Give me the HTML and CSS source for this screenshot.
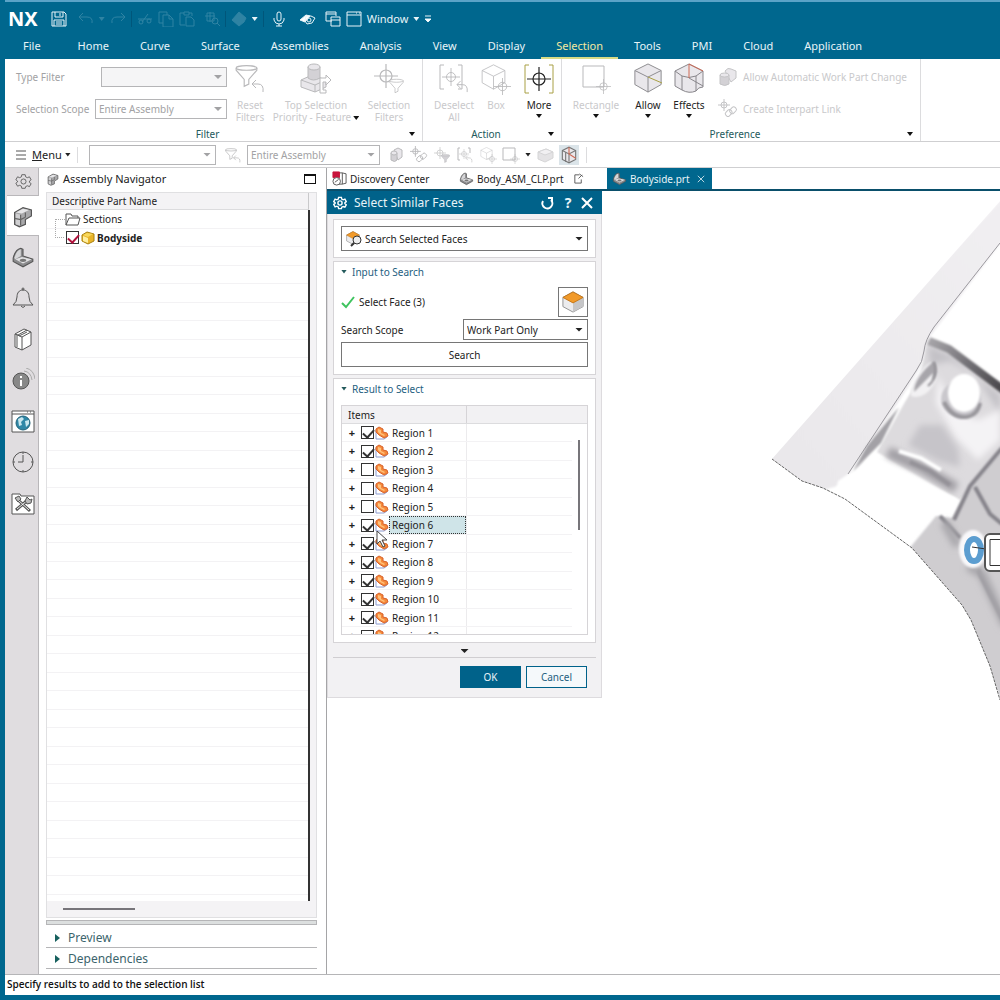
FILE: index.html
```
<!DOCTYPE html>
<html lang="en">
<head>
    <meta charset="UTF-8">
    <meta name="viewport" content="width=device-width, initial-scale=1.0">
    <title>NX - Select Similar Faces</title>
    <link rel="stylesheet" href="styles.css">
</head>
<body>
    <!-- Shared icons -->
    <svg class="sprite" aria-hidden="true">
        <symbol id="target" viewBox="0 0 20 20"><path d="M10 0v20M0 10h20"/><circle cx="10" cy="10" r="5"/></symbol>
        <symbol id="funnel" viewBox="0 0 20 20"><path d="M1 3v2l7 8v6l4-2v-4l7-8V3"/><ellipse cx="10" cy="3" rx="9" ry="2"/></symbol>
        <symbol id="cube" viewBox="0 0 32 32"><path d="M16 1l14 7v15l-14 8-14-8V8z"/><path d="M2 8l14 7 14-7M16 15v16" /></symbol>
        <symbol id="back" viewBox="0 0 14 14"><path d="M5 1L1 5l4 4M1 5h6q6 0 5 8"/></symbol>
        <symbol id="links" viewBox="0 0 20 20"><path d="M6 0v12M0 6h12"/><circle cx="6" cy="6" r="3"/><rect x="7" y="12" width="7" height="5" rx="2" transform="rotate(-45 10 14)"/><rect x="12" y="9" width="7" height="5" rx="2" transform="rotate(-45 15 12)"/></symbol>
        <symbol id="asm" viewBox="0 0 20 20"><path fill="#a9a9ab" stroke="#555" d="M3 7l7-4 7 2v5l-5 3v4l-5 2-4-2z"/><path fill="#e6e6e8" stroke="none" d="M4 7l6-3 5 1-6 3z"/><path fill="#cfcfd1" stroke="none" d="M4 8l4 1v9l-4-1z"/><path stroke="#666" d="M3 12l5 1 4-2M8 9v9M12 7v4"/></symbol>
        <symbol id="part" viewBox="0 0 22 20"><path fill="#8b8b8d" stroke="#555" d="M2 11Q4 3 9 2l2 1v6l9 3v2l-9 5-9-5z"/><path fill="#d6d6d8" stroke="none" d="M3 11Q5 4 9 3v6l-5 3z"/><path fill="#e2e2e4" stroke="none" d="M4 12l6-2 9 2-8 4z"/><ellipse cx="11" cy="13" rx="3" ry="1.5" fill="#777" stroke="none"/></symbol>
        <symbol id="face" viewBox="0 0 24 24"><path fill="#ececee" stroke="#8c8c8c" d="M12 1l11 6v10l-11 6-11-6V7z"/><path fill="#c6c6c8" stroke="none" d="M12 13l11-6v10l-11 6z"/><path fill="#f19a2a" stroke="#c37415" d="M12 1l11 6-11 6L1 7z"/></symbol>
        <symbol id="region" viewBox="0 0 14 14"><path fill="#fff" stroke="#8c9bd0" d="M1 4v9h8l3-2"/><path fill="#f58a3a" stroke="#d8612a" d="M1 3l3-2 4 2v3l4 1 1 3-4 2-5-3-3-3z"/><path fill="#ffc27e" stroke="none" d="M3 3l3 1v3l4 2-1 1-4-2-2-2z"/></symbol>
        <symbol id="gear" viewBox="0 0 20 20"><path d="M8 2h4l.5 2.500 2 1 2.500-1 2 3.500-2 1.500v1.500l2 1.500-2 3.500-2.500-1-2 1L12 18H8l-.5-2.500-2-1-2.500 1-2-3.500 2-1.500V9.500L1 8l2-3.500 2.500 1 2-1z"/><circle cx="10" cy="10" r="3"/></symbol>
    </svg>

    <header class="titlebar">
        <div class="quick">
            <strong class="logo">NX</strong>
            <svg class="ico save" viewBox="0 0 16 16"><path d="M1 1h12l2 2v12H1zM4 1v5h8V1M9 2v3M3 15V9h10v6M5 11h6M5 13h6"/></svg>
            <svg class="ico dim undo" viewBox="0 0 16 16"><path d="M5 2L1 6l4 4M1 6h8q6 0 5 6"/></svg>
            <i class="caret dim"></i>
            <svg class="ico dim" viewBox="0 0 16 16"><path d="M11 2l4 4-4 4M15 6H7q-6 0-5 6"/></svg>
            <i class="sep"></i>
            <svg class="ico dim" viewBox="0 0 16 16"><path d="M1 8h14M11 3L5 11"/><circle cx="4" cy="11" r="2"/><circle cx="12" cy="10" r="2"/></svg>
            <svg class="ico dim" viewBox="0 0 16 16"><path d="M1 1h8v3M1 1v11h4M5 4h6l4 4v8H5zM11 4v4h4"/></svg>
            <svg class="ico dim" viewBox="0 0 16 16"><path d="M5 2H1v12h5M5 1h5v3H5zM10 2h3v3M7 6h5l3 3v6H7z"/></svg>
            <svg class="ico dim find" viewBox="0 0 16 16"><path d="M1 5h10M6 1v10M3 2h7v8H3z"/><circle cx="11" cy="10" r="3"/><path d="M13 12l3 3"/></svg>
            <i class="sep"></i>
            <svg class="ico dim solid" viewBox="0 0 16 16"><path d="M8 1l7 6-2 4-5 4-7-6z"/></svg>
            <i class="caret"></i>
            <i class="sep"></i>
            <svg class="ico mic" viewBox="0 0 16 16"><rect x="6" y="1" width="4" height="9" rx="2"/><path d="M3 7v2q1 4 5 4t5-4V7M8 13v2M5 15h6"/></svg>
            <svg class="ico touch" viewBox="0 0 16 16"><path class="white" d="M0 9l6-5 4 1-5 6z"/><path d="M6 5h5l4 2-3 5-5 1-2-3z"/><circle cx="9" cy="9" r="2"/></svg>
            <svg class="ico cascade" viewBox="0 0 16 16"><path d="M7 10H1V1h10v4M1 3h10M6 6h9v9H6zM6 9h9"/></svg>
            <svg class="ico" viewBox="0 0 16 16"><path d="M1 1h14v14H1zM1 4h14M10 2h1M13 2h1"/></svg>
            <button class="window-menu">Window</button>
            <i class="caret"></i>
            <svg class="ico small" viewBox="0 0 8 8"><path d="M1 1h6"/><path class="white" d="M1 4h6L4 7z"/></svg>
        </div>
        <nav class="tabs">
            <a class="file" href="#">File</a>
            <a href="#">Home</a>
            <a href="#">Curve</a>
            <a href="#">Surface</a>
            <a href="#">Assemblies</a>
            <a href="#">Analysis</a>
            <a href="#">View</a>
            <a href="#">Display</a>
            <a class="current" href="#">Selection</a>
            <a href="#">Tools</a>
            <a href="#">PMI</a>
            <a href="#">Cloud</a>
            <a href="#">Application</a>
        </nav>
    </header>

    <section class="ribbon">
        <div class="group filter">
            <div class="tools">
                <div class="fields">
                    <div class="field">
                        <label for="typeFilter">Type Filter</label>
                        <span class="select short"><select id="typeFilter" disabled><option></option></select></span>
                    </div>
                    <div class="field">
                        <label for="selScope">Selection Scope</label>
                        <span class="select"><select id="selScope" disabled><option>Entire Assembly</option></select></span>
                    </div>
                </div>
                <button class="tool reset" disabled>
                    <svg viewBox="0 0 32 32"><use href="#funnel" x="1" y="0" width="23" height="26"/><use href="#back" x="17" y="16" width="14" height="14"/></svg>
                    <span>Reset Filters</span>
                </button>
                <button class="tool top-sel" disabled>
                    <svg viewBox="0 0 32 32"><path class="shade" d="M1 17l11-5 14 5v7l-11 5-14-5z"/><path d="M1 17l14 5v7M15 22l11-5"/><path class="dark" d="M8 4v11q5 4 12 0V4z"/><ellipse class="shade" cx="14" cy="4" rx="6" ry="3"/><path class="paper" d="M20 15h6v-3l5 5-5 5v-3h-3v8h3v3h-6z"/></svg>
                    <span>Top Selection<br>Priority - Feature<i class="caret inline"></i></span>
                </button>
                <button class="tool sel-filters" disabled>
                    <svg viewBox="0 0 32 32"><use href="#target" x="1" y="1" width="24" height="24"/><use href="#funnel" class="paper" x="16" y="15" width="15" height="16"/></svg>
                    <span>Selection Filters</span>
                </button>
            </div>
            <div class="group-name">Filter<i class="caret"></i></div>
        </div>

        <div class="group action">
            <div class="tools">
                <button class="tool deselect" disabled>
                    <svg viewBox="0 0 32 32"><path d="M6 2H2v24h4M20 2h4v24h-4"/><use href="#target" x="4" y="5" width="18" height="18"/><use href="#back" x="18" y="17" width="13" height="13"/></svg>
                    <span>Deselect All</span>
                </button>
                <button class="tool box" disabled>
                    <svg viewBox="0 0 32 32"><use href="#cube" x="0" y="1" width="27" height="26"/><use href="#target" x="14" y="15" width="17" height="17"/></svg>
                    <span>Box</span>
                </button>
                <button class="tool on more">
                    <svg viewBox="0 0 32 32"><path class="olive" d="M6 2H2v28h4M26 2h4v28h-4"/><use href="#target" x="4" y="4" width="24" height="24"/></svg>
                    <span>More</span><i class="caret"></i>
                </button>
            </div>
            <div class="group-name">Action<i class="caret"></i></div>
        </div>

        <div class="group preference">
            <div class="tools">
                <button class="tool rect" disabled>
                    <svg viewBox="0 0 32 32"><path d="M3 3h21v21H3z"/><use href="#target" x="16" y="16" width="15" height="15"/></svg>
                    <span>Rectangle</span><i class="caret"></i>
                </button>
                <button class="tool on allow">
                    <svg viewBox="0 0 32 32"><use href="#cube" class="shade" width="32" height="30"/><path class="olive" d="M16 14l14 6"/></svg>
                    <span>Allow</span><i class="caret"></i>
                </button>
                <button class="tool on effects">
                    <svg viewBox="0 0 32 32"><path class="shade" d="M2 8l14-7 14 7v16q-5 0-7 4-7 3-14-1l-7-4z"/><path d="M2 8l7 5q7 3 14 0l7-5M9 13v14M23 13v15"/><path d="M16 15l14 8"/><path class="red" d="M16 15V1l14 7"/></svg>
                    <span>Effects</span><i class="caret"></i>
                </button>
                <div class="links">
                    <button disabled><svg viewBox="0 0 20 20"><path class="shade" d="M7 4q3-4 6-2l5 2v7l-5 4z"/><path class="dark" d="M2 8v9q5 3 9 0V8z"/><ellipse class="shade" cx="6.500" cy="8" rx="4.500" ry="2"/></svg>Allow Automatic Work Part Change</button>
                    <button disabled><svg viewBox="0 0 20 20"><use href="#links" width="20" height="20"/></svg>Create Interpart Link</button>
                </div>
            </div>
            <div class="group-name">Preference<i class="caret"></i></div>
        </div>
    </section>

    <section class="toolbar">
        <button class="menu"><svg viewBox="0 0 10 10"><path d="M0 1h10M0 5h10M0 9h10"/></svg><span><u>M</u>enu</span><i class="caret"></i></button>
        <i class="sep"></i>
        <span class="select type"><select aria-label="Type filter" disabled><option></option></select></span>
        <svg class="bar-ico" viewBox="0 0 18 18"><use href="#funnel" x="1" y="1" width="12" height="14"/><use href="#back" x="9" y="9" width="8" height="8"/></svg>
        <span class="select scope"><select aria-label="Selection scope" disabled><option>Entire Assembly</option></select></span>
        <div class="bar-icons">
            <svg viewBox="0 0 18 18"><path class="shade" d="M7 4l4-2 4 2v7l-4 3z"/><path class="dark" d="M4 7v7q4 3 6 0V7z"/><ellipse class="shade" cx="7" cy="7" rx="3" ry="2"/></svg>
            <svg viewBox="0 0 18 18"><use href="#links" width="18" height="18"/></svg>
            <svg viewBox="0 0 18 18"><use href="#target" x="1" y="1" width="12" height="12"/><use href="#funnel" class="dark" x="8" y="8" width="9" height="9"/></svg>
            <svg viewBox="0 0 18 18"><path d="M4 2H2v12h2M12 2h2v5"/><use href="#target" x="3" y="3" width="10" height="10"/><use href="#back" x="9" y="9" width="8" height="8"/></svg>
            <svg viewBox="0 0 18 18"><use href="#cube" x="1" y="1" width="13" height="13"/><use href="#target" x="8" y="8" width="10" height="10"/></svg>
            <svg viewBox="0 0 18 18"><path d="M1 2h12v12H1z"/><use href="#target" x="8" y="8" width="10" height="10"/></svg>
            <i class="caret"></i>
            <svg class="faint" viewBox="0 0 18 18"><path class="dark" d="M2 6l8-3 7 3v6l-8 4-7-3z"/><path class="shade" d="M2 6l7 3 8-3-7-3z"/></svg>
            <svg class="pressed" viewBox="0 0 18 18"><path class="shade" d="M3 5l6-3 6 3v8l-6 3-6-3z"/><path d="M6 7v8M3 5l6 3 6-3M9 8v7"/><path class="red" d="M9 2v6l6 4"/></svg>
        </div>
        <i class="sep"></i>
    </section>

    <main class="workspace">
        <nav class="rail">
            <button class="first" aria-label="Settings"><svg viewBox="0 0 24 24"><use href="#gear" x="4" y="3" width="17" height="17"/></svg></button>
            <button class="current" aria-label="Assembly Navigator"><svg viewBox="0 0 20 20"><use href="#asm"/></svg></button>
            <button aria-label="Part Navigator"><svg viewBox="0 0 20 20"><use href="#part"/></svg></button>
            <button aria-label="Notifications"><svg viewBox="0 0 24 24"><path d="M2 19h20q-4-3-4-8c0-4-2-7-6-7s-6 3-6 7q0 5-4 8z"/><circle cx="12" cy="3" r="1"/><path d="M10 20q2 3 4 0"/></svg></button>
            <button aria-label="Reuse Library"><svg viewBox="0 0 24 24"><path class="paper" d="M4 7l9-5 7 3v13l-9 5-7-3zM4 7l7 3v13M11 10l9-5M7 8l9-5M6 7v13M8 9l8-4"/></svg></button>
            <button aria-label="Information"><svg viewBox="0 0 24 24"><circle cx="10" cy="13" r="8" fill="#888"/><path stroke="#fff" stroke-width="2" d="M10 8v2M10 12v6"/><path class="wave" d="M13 3q7 1 8 9M15 0q8 2 9 11"/></svg></button>
            <button aria-label="Web Browser"><svg viewBox="0 0 24 24"><path class="paper" d="M1 2h22v21H1zM1 5h22M16 3h1M19 3h1"/><circle cx="12" cy="14" r="7" fill="#2f87a6" stroke="#24647b"/><path fill="#c9e7ef" stroke="none" d="M7 10l4-2 2 2-3 3 1 3-3 1zM14 12l4-1v4l-3 3z"/></svg></button>
            <button aria-label="History"><svg viewBox="0 0 24 24"><circle cx="12" cy="12" r="10"/><path d="M12 5v7H7M12 2v2M12 20v2M2 12h2M20 12h2"/></svg></button>
            <button aria-label="Roles"><svg viewBox="0 0 24 24"><path class="paper" d="M1 3h8l1 2h13v18H1z"/><path stroke-width="3" d="M5 19L18 8M6 8l13 12"/><path stroke="#eee" d="M6 18L17 9M7 9l11 10"/><path d="M4 7l4-2 2 3-3 3zM16 6l3 3 2-1-1 4-4 1-2-3z" fill="#bbb"/></svg></button>
        </nav>

        <aside class="navigator">
            <h2><svg viewBox="0 0 20 20"><use href="#asm"/></svg>Assembly Navigator<i class="maximize"></i></h2>
            <div class="tree-box">
                <div class="tree-head">Descriptive Part Name</div>
                <ul class="tree">
                    <li><svg viewBox="0 0 16 14"><path d="M1 13V2h5l1 2h6v2M1 13l3-7h11l-2 7z"/></svg>Sections</li>
                    <li class="part"><input type="checkbox" id="bodyside" checked><svg viewBox="0 0 14 14"><path fill="#e9b42a" stroke="#a8810f" d="M1 4l5-3 7 2v7l-6 3-6-3z"/><path fill="#fff0a0" stroke="none" d="M2 5l5 2v5l-5-2z"/><path fill="#f8d95c" stroke="none" d="M2 4l4-2 6 1-5 3z"/></svg><label for="bodyside">Bodyside</label></li>
                </ul>
                <div class="hscroll"><i></i></div>
            </div>
            <div class="splitter"></div>
            <button class="fold">Preview</button>
            <button class="fold">Dependencies</button>
        </aside>

        <section class="graphics">
            <nav class="docs">
                <a class="discovery" href="#"><svg viewBox="0 0 16 16"><path d="M7 2h4v12H7M11 2l4 1v10l-4 1"/><path fill="#c8143c" stroke="#c8143c" d="M1 1h7v6H1z"/><circle class="paper" cx="5" cy="11" r="4"/><path d="M3 12l4-3"/></svg>Discovery Center</a>
                <a class="asm-doc" href="#"><svg viewBox="0 0 20 20"><use href="#part"/></svg>Body_ASM_CLP.prt<svg class="mod" viewBox="0 0 12 12"><path d="M7 2H2v9h7V7M6 6l4-4M7 1l4 3"/></svg></a>
                <a class="current" href="#"><svg viewBox="0 0 20 20"><use href="#part"/></svg>Bodyside.prt<svg class="close" viewBox="0 0 10 10"><path d="M1 1l8 8M9 1L1 9"/></svg></a>
            </nav>

            <div class="canvas">
                <!-- Bodyside panel, shaded -->
                <svg class="model" viewBox="327 191 673 783" preserveAspectRatio="xMinYMin slice">
                    <defs>
                        <linearGradient id="flange" x1="0" y1="1" x2="1" y2="0"><stop offset="0" stop-color="#e9e7ea"/><stop offset="1" stop-color="#f1eff2"/></linearGradient>
                        <linearGradient id="roof" gradientUnits="userSpaceOnUse" x1="928" y1="340" x2="1000" y2="385"><stop offset="0" stop-color="#a9a7ab"/><stop offset=".5" stop-color="#77757a"/><stop offset="1" stop-color="#4c4a4e"/></linearGradient>
                        <filter id="soft1" x="-50%" y="-50%" width="200%" height="200%"><feGaussianBlur stdDeviation="1"/></filter>
                        <filter id="soft3" x="-50%" y="-50%" width="200%" height="200%"><feGaussianBlur stdDeviation="3"/></filter>
                        <clipPath id="outline"><path d="M1000 201L772 459l30 22 21 7 22 11 67 49 50 57 9 15 19 46 10 34z"/></clipPath>
                    </defs>
                    <g clip-path="url(#outline)">
                        <path fill="#fff" d="M772 191h228v520H772z"/>
                        <path fill="url(#flange)" filter="url(#soft1)" d="M1006 194L766 459l36 24 21 7 22-6 12-12 64-106 8-28 77-102z"/>
                        <path fill="#dddbde" filter="url(#soft1)" d="M928 338l80 50v70l-48 42-66-38-17-10 43-77z"/>
                        <path fill="#c3c1c6" filter="url(#soft3)" d="M928 345l25 12 47 38v18l-25-38-25-14-20 4z"/>
                        <path fill="#f4f3f5" filter="url(#soft3)" d="M938 375l15 35 25 10 22-10v30l-22 20-22-22-20-35z"/>
                        <path fill="#c6c4c9" filter="url(#soft3)" d="M920 425l22 0 16 24 2 18-22-6-30-16z"/>
                        <path fill="none" stroke="#a19fa4" stroke-width="11" filter="url(#soft3)" d="M888 452l34 16 34 20"/>
                        <path fill="none" stroke="#949298" stroke-width="4" filter="url(#soft1)" d="M910 462l20 9 20 14"/>
                        <path fill="none" stroke="#fff" stroke-width="4" filter="url(#soft1)" d="M899 451l22 7 20 12"/>
                        <path fill="#fff" filter="url(#soft1)" d="M873 457l84 42 0 20-26 0-34 40-65-50 6-28z"/>
                        <path fill="#cfcdd0" filter="url(#soft1)" d="M1004 450l-34 36-18 32-16-2-28 34 54 62 45 100z"/>
                        <path fill="none" stroke="url(#roof)" stroke-width="8" filter="url(#soft1)" d="M929 341l20 8 56 42"/>
                        <path fill="none" stroke="#85838a" stroke-width="4" filter="url(#soft1)" d="M1002 448l-32 38-16 34M975 487l15 27 12 10M940 516l20 22M978 570l26 52"/>
                        <path fill="none" stroke="#a9a7ac" stroke-width="9" filter="url(#soft3)" d="M944 522l14 24M968 566l14 8 24 52"/>
                        <path fill="#f2f1f3" filter="url(#soft1)" d="M911 396q-2-18 20-34 10 12 2 24-10 14-22 10z"/>
                        <path fill="#a7a5aa" filter="url(#soft1)" d="M914 392q0-14 20-31 6 12-2 20l1-8z"/>
                        <path fill="none" stroke="#8d8b90" stroke-width="2" filter="url(#soft1)" d="M934 362q5 15-6 24"/>
                        <ellipse cx="961" cy="399" rx="20" ry="18" fill="#c9c7cc" filter="url(#soft1)"/>
                        <path fill="none" stroke="#98969b" stroke-width="4" filter="url(#soft1)" d="M944 402q8 16 22 15 12-2 14-14"/>
                        <ellipse cx="964" cy="393" rx="16" ry="19" fill="#fff" filter="url(#soft1)"/>
                        <path fill="none" stroke="#fff" stroke-width="3" filter="url(#soft1)" d="M909 391l-57 80"/>
                        <path fill="#a3a1a6" filter="url(#soft1)" d="M899 407l-18 36-28 28 14-25z"/>
                        <ellipse cx="973" cy="549" rx="14" ry="19" fill="#f8f8fa" filter="url(#soft1)"/>
                    </g>
                    <path fill="none" stroke="#9b999e" d="M1000 243l-66 84q-9 13-10 24t-8 20l-68 103"/>
                    <path fill="none" stroke="#666" stroke-dasharray="3 1" d="M772 459l30 22 21 7 22 11 67 49 50 57 9 15 19 46 10 34"/>
                    <ellipse cx="974" cy="550" rx="7" ry="11" fill="#fff" stroke="#5b9dd0" stroke-width="6"/>
                    <path stroke="#333" d="M972 547l14 2"/>
                    <rect x="985" y="534" width="40" height="37" rx="5" fill="#fff" stroke="#555" stroke-width="2"/>
                    <path fill="#fff" stroke="#333" d="M1020 539.500h-30v26h30"/>
                </svg>

                <form class="dialog" onsubmit="return false">
                    <div class="dialog-title">
                        <svg viewBox="0 0 20 20"><use href="#gear"/></svg>
                        <h1>Select Similar Faces</h1>
                        <button type="button" aria-label="Reset"><svg viewBox="0 0 14 14"><path d="M3 5a5 5 0 1 0 8-1M8 2h4v4"/></svg></button>
                        <button type="button" aria-label="Help">?</button>
                        <button type="button" aria-label="Close"><svg viewBox="0 0 14 14"><path d="M2 2l10 10M12 2L2 12"/></svg></button>
                    </div>

                    <div class="card method">
                        <span class="select">
                            <svg viewBox="0 0 16 16"><use href="#face" width="14" height="14"/><circle cx="11" cy="9" r="4" fill="#eee" stroke="#333"/><path stroke="#333" stroke-width="2" d="M8 12l-3 3"/></svg>
                            <select aria-label="Search method"><option>Search Selected Faces</option></select>
                        </span>
                    </div>

                    <div class="card input">
                        <h3>Input to Search</h3>
                        <div class="line">
                            <svg class="tick" viewBox="0 0 14 14"><path d="M1 8l4 4 8-10"/></svg>
                            <span>Select Face (3)</span>
                            <button type="button" class="pick" aria-label="Select Face"><svg viewBox="0 0 24 24"><use href="#face"/></svg></button>
                        </div>
                        <div class="line scope-line">
                            <label for="scope">Search Scope</label>
                            <span class="select"><select id="scope"><option>Work Part Only</option></select></span>
                        </div>
                        <button type="button" class="search">Search</button>
                    </div>

                    <div class="card result">
                        <h3>Result to Select</h3>
                        <div class="items">
                            <div class="items-head">Items</div>
                            <ul>
                                <li><b>+</b><input type="checkbox" id="r1" checked><svg><use href="#region"/></svg><label for="r1">Region 1</label></li>
                                <li><b>+</b><input type="checkbox" id="r2" checked><svg><use href="#region"/></svg><label for="r2">Region 2</label></li>
                                <li><b>+</b><input type="checkbox" id="r3"><svg><use href="#region"/></svg><label for="r3">Region 3</label></li>
                                <li><b>+</b><input type="checkbox" id="r4"><svg><use href="#region"/></svg><label for="r4">Region 4</label></li>
                                <li><b>+</b><input type="checkbox" id="r5"><svg><use href="#region"/></svg><label for="r5">Region 5</label></li>
                                <li class="selected"><b>+</b><input type="checkbox" id="r6" checked><svg><use href="#region"/></svg><label for="r6">Region 6</label>
                                    <svg class="cursor" viewBox="0 0 12 18"><path d="M1 1v13l3-3 3 6 2-1-3-6h5z"/></svg></li>
                                <li><b>+</b><input type="checkbox" id="r7" checked><svg><use href="#region"/></svg><label for="r7">Region 7</label></li>
                                <li><b>+</b><input type="checkbox" id="r8" checked><svg><use href="#region"/></svg><label for="r8">Region 8</label></li>
                                <li><b>+</b><input type="checkbox" id="r9" checked><svg><use href="#region"/></svg><label for="r9">Region 9</label></li>
                                <li><b>+</b><input type="checkbox" id="r10" checked><svg><use href="#region"/></svg><label for="r10">Region 10</label></li>
                                <li><b>+</b><input type="checkbox" id="r11" checked><svg><use href="#region"/></svg><label for="r11">Region 11</label></li>
                                <li><b>+</b><input type="checkbox" id="r12" checked><svg><use href="#region"/></svg><label for="r12">Region 12</label></li>
                            </ul>
                            <i class="thumb"></i>
                        </div>
                    </div>

                    <div class="expand"><i class="caret"></i></div>
                    <div class="buttons">
                        <button type="submit" class="ok">OK</button>
                        <button type="button" class="cancel">Cancel</button>
                    </div>
                </form>
            </div>
        </section>
    </main>

    <footer class="status">Specify results to add to the selection list</footer>
</body>
</html>
```
FILE: styles.css
```
* {
    box-sizing: border-box;
}
body {
    margin: 0;
    height: 100vh;
    display: flex;
    flex-direction: column;
    overflow: hidden;
    border-left: 5px solid #00678e;
    border-bottom: 5px solid #00678e;
    background: #fff;
    color: #222;
    font-family: "Noto Sans", "Open Sans", sans-serif;
    font-size: 10px;
    line-height: 14px;
}
button, select, input {
    font: inherit;
    color: inherit;
    margin: 0;
}
button {
    padding: 0;
    border: 0;
    background: none;
}
a {
    color: inherit;
    text-decoration: none;
}
h1, h2, h3, ul {
    margin: 0;
    padding: 0;
    font-size: inherit;
    font-weight: normal;
    list-style: none;
}
svg {
    flex: none;
    fill: none;
    stroke: #555;
}
.sprite {
    position: absolute;
    width: 0;
    height: 0;
}
.caret {
    flex: none;
    width: 6px;
    height: 4px;
    background: currentColor;
    clip-path: polygon(0 0, 100% 0, 50% 100%);
}
.paper {
    fill: #fff;
}
.shade {
    fill: #e9e7eb;
}
.dark {
    fill: #d3d1d5;
}
.white {
    fill: #fff;
}
.olive {
    stroke: #a9a044;
}
.red {
    stroke: #cf6a55;
}

/* Drop-downs */
.select {
    position: relative;
    display: flex;
    align-items: center;
    border: 1px solid #767676;
    background: #fff;
}
.select select {
    flex: 1;
    min-width: 0;
    height: 100%;
    padding: 0 16px 0 3px;
    border: 0;
    appearance: none;
    background: none;
    opacity: 1;
}
.select::after {
    content: "";
    position: absolute;
    right: 4px;
    width: 8px;
    height: 4px;
    background: currentColor;
    clip-path: polygon(0 0, 100% 0, 50% 100%);
}

/* Title bar */
.titlebar {
    height: 59px;
    flex: none;
    margin-left: -5px;
    padding-left: 5px;
    border-top: 2px solid #5ba3c7;
    background: #00678e;
    color: #e8f4f8;
    font-size: 11px;
}
.quick {
    display: flex;
    align-items: center;
    gap: 5px;
    height: 34px;
}
.logo {
    margin: 0 8px 0 3px;
    color: #fff;
    font-size: 20px;
    line-height: 24px;
}
.ico {
    width: 16px;
    height: 16px;
    stroke: #e8f4f8;
}
.ico.undo {
    margin-left: 6px;
}
.ico.find, .ico.cascade {
    margin-left: 4px;
}
.ico.mic {
    margin-left: 2px;
}
.ico.touch {
    margin-left: 8px;
}
.ico.small {
    width: 8px;
    height: 8px;
}
.quick .dim {
    opacity: .2;
}
.quick .solid path {
    fill: #e8f4f8;
}
.sep {
    flex: none;
    width: 1px;
    height: 16px;
    background: #00567a;
}
.tabs {
    display: flex;
    gap: 1px;
    height: 23px;
    padding-left: 3px;
}
.tabs a {
    padding: 3px 15px 0;
    white-space: nowrap;
}
.tabs .file {
    margin-right: 6px;
}
.tabs .current {
    color: #f3e7a0;
    border-bottom: 2px solid #d9dc86;
}

/* Ribbon */
.ribbon {
    display: flex;
    flex: none;
    height: 83px;
    border-bottom: 1px solid #cfcfd1;
}
.group {
    display: flex;
    flex-direction: column;
    justify-content: space-between;
    border-right: 1px solid #dcdcde;
}
.group.filter {
    width: 418px;
}
.group.action {
    width: 139px;
}
.group.preference {
    width: 359px;
}
.tools {
    display: flex;
    color: #c9c9cb;
}
.filter .tools {
    padding-left: 11px;
}
.action .tools {
    padding-left: 8px;
}
.preference .tools {
    padding-left: 7px;
}
.group-name {
    display: flex;
    align-items: center;
    justify-content: center;
    position: relative;
    height: 14px;
    padding-right: 12px;
    color: #245a5c;
}
.group-name .caret {
    position: absolute;
    right: 7px;
    color: #111;
}
.fields {
    display: flex;
    flex-direction: column;
    gap: 12px;
    width: 211px;
    padding-top: 8px;
}
.field {
    display: flex;
    justify-content: space-between;
    align-items: center;
    color: #a2a2a4;
    white-space: nowrap;
}
.field .select {
    width: 132px;
    height: 20px;
    border-color: #b5b5b7;
}
.field .short {
    width: 126px;
    background: #f5f5f6;
}
.tool {
    display: flex;
    flex-direction: column;
    align-items: center;
    padding-top: 4px;
    line-height: 12px;
}
.tool svg {
    width: 32px;
    height: 32px;
    margin-bottom: 4px;
    stroke: #b9b9bb;
}
.tool .caret {
    margin-top: 3px;
    color: #111;
}
.tool .caret.inline {
    display: inline-block;
    margin: 0 0 1px 2px;
}
.tool.on {
    color: #222;
}
.tool.on svg {
    stroke: #88868b;
}
.tool.on .olive {
    stroke: #a9a044;
}
.tool.on .red {
    stroke: #cf6a55;
}
.tool.more use {
    stroke: #222;
}
.reset {
    width: 42px;
    margin-left: 2px;
}
.top-sel {
    width: 90px;
    white-space: nowrap;
}
.sel-filters {
    width: 52px;
    margin-left: 2px;
}
.deselect {
    width: 46px;
}
.box {
    width: 38px;
}
.more {
    width: 38px;
    margin-left: 5px;
}
.rect {
    width: 54px;
}
.allow {
    width: 46px;
    margin-left: 2px;
}
.effects {
    width: 36px;
}
.links {
    display: flex;
    flex-direction: column;
    gap: 12px;
    padding: 8px 0 0 11px;
}
.links button {
    display: flex;
    align-items: center;
    gap: 5px;
    color: #c9c9cb;
    white-space: nowrap;
}
.links svg {
    width: 20px;
    height: 20px;
    stroke: #c4c4c6;
}

/* Selection toolbar */
.toolbar {
    display: flex;
    align-items: center;
    flex: none;
    height: 26px;
    border-bottom: 1px solid #cfcfd1;
}
.menu {
    display: flex;
    align-items: center;
    width: 72px;
    padding-left: 11px;
    font-size: 11px;
}
.menu svg {
    width: 10px;
    height: 10px;
    margin-right: 6px;
}
.menu .caret {
    margin-left: 3px;
}
.toolbar .sep {
    background: #dcdcde;
}
.toolbar .select {
    height: 20px;
    border-color: #b5b5b7;
    color: #a2a2a4;
}
.toolbar .type {
    width: 127px;
    margin-left: 11px;
}
.toolbar .scope {
    width: 133px;
}
.bar-ico {
    width: 18px;
    height: 18px;
    margin: 0 5px 0 8px;
    stroke: #a8a8aa;
}
.bar-icons {
    display: flex;
    align-items: center;
    gap: 5px;
    margin: 0 7px;
}
.bar-icons svg {
    width: 18px;
    height: 18px;
    stroke: #b9b9bb;
}
.bar-icons .faint {
    opacity: .6;
}
.bar-icons .pressed {
    width: 20px;
    height: 20px;
    background: #dbe4e9;
    stroke: #777;
}

/* Workspace */
.workspace {
    display: flex;
    flex: 1;
    min-height: 0;
}
.rail {
    width: 34px;
    flex: none;
    padding-left: 2px;
    border-right: 1px solid #b9b7ba;
    background: #e0dde0;
}
.rail button {
    display: flex;
    align-items: center;
    justify-content: center;
    width: 32px;
    height: 41px;
}
.rail .first {
    height: 28px;
    border-bottom: 1px solid #b9b7ba;
}
.rail .current {
    height: 40px;
    background: #fff;
    border-bottom: 1px solid #b9b7ba;
}
.rail svg {
    width: 24px;
    height: 24px;
}
.rail .wave {
    stroke: #aaa;
}
.navigator {
    display: flex;
    flex-direction: column;
    width: 288px;
    flex: none;
    padding: 0 9px 5px 7px;
    border-right: 1px solid #a5a5a7;
}
.navigator h2 {
    display: flex;
    align-items: center;
    height: 24px;
    padding: 0 1px 3px 0;
    font-size: 11px;
}
.navigator h2 svg {
    width: 14px;
    height: 14px;
    margin-right: 3px;
}
.maximize {
    width: 12px;
    height: 10px;
    margin-left: auto;
    border: 1px solid #111;
    border-top-width: 2px;
}
.tree-box {
    display: flex;
    flex-direction: column;
    flex: 1;
    border: 1px solid #e0e0e2;
    background: #f4f3f5;
}
.tree-head {
    height: 17px;
    margin-right: 7px;
    padding: 1px 0 0 5px;
    border-right: 1px solid #c9c9cb;
    border-bottom: 1px solid #dcdcde;
}
.tree {
    flex: 1;
    margin-right: 6px;
    border-right: 2px solid #333;
    background: repeating-linear-gradient(#fff 0 18px, #f3f2f4 18px 19px, #fff 19px 36px, #f3f2f4 36px 37px);
}
.tree li {
    display: flex;
    align-items: center;
    position: relative;
    height: 18px;
    padding-left: 18px;
}
.tree li::before {
    content: "";
    position: absolute;
    left: 8px;
    top: 9px;
    width: 9px;
    height: 18px;
    border-left: 1px dotted #aaa;
    border-top: 1px dotted #aaa;
}
.tree li.part::before {
    height: 0;
    border-left: 0;
}
.tree svg {
    width: 16px;
    height: 14px;
    margin-right: 2px;
}
.tree .part {
    height: 19px;
    font-weight: bold;
}
.tree .part svg {
    width: 14px;
    margin: 0 2px;
}
input[type="checkbox"] {
    flex: none;
    width: 13px;
    height: 13px;
    border: 1px solid #333;
    appearance: none;
    background: #fff;
    color: #333;
}
input[type="checkbox"]:checked::after {
    content: "";
    display: block;
    width: 9px;
    height: 5px;
    margin: 2px 0 0 1px;
    border: solid currentColor;
    border-width: 0 0 2px 2px;
    transform: rotate(-48deg);
}
.tree input[type="checkbox"] {
    margin-left: 1px;
    color: #b0123c;
}
.hscroll {
    height: 16px;
    padding: 7px 0 0 16px;
}
.hscroll i {
    display: block;
    width: 72px;
    height: 2px;
    background: #77757a;
}
.splitter {
    height: 5px;
    margin: 2px 0;
    border: 1px solid #b5b5b7;
    background: #dcdfdf;
}
.fold {
    display: flex;
    align-items: center;
    gap: 8px;
    height: 21px;
    padding: 2px 0 0 9px;
    border-bottom: 1px solid #b5b5b7;
    color: #3c646c;
    font-size: 12px;
}
.fold::before {
    content: "";
    width: 5px;
    height: 8px;
    background: #17605e;
    clip-path: polygon(0 0, 100% 50%, 0 100%);
}

/* Document tabs */
.graphics {
    display: flex;
    flex-direction: column;
    flex: 1;
    min-width: 0;
}
.docs {
    display: flex;
    height: 23px;
    border-bottom: 2px solid #0a4f6b;
}
.docs a {
    display: flex;
    align-items: center;
    gap: 3px;
    white-space: nowrap;
}
.docs svg {
    width: 15px;
    height: 15px;
}
.docs .discovery {
    width: 127px;
    padding-left: 5px;
}
.docs .asm-doc {
    width: 153px;
    padding-left: 5px;
}
.docs .mod {
    width: 11px;
    height: 11px;
    margin-left: 6px;
}
.docs .current {
    width: 105px;
    padding-left: 5px;
    background: #00678e;
    color: #e8f4f8;
}
.docs .close {
    width: 8px;
    height: 8px;
    margin-left: 4px;
    stroke: #e8f4f8;
}
.canvas {
    position: relative;
    flex: 1;
    min-height: 0;
}
.model {
    display: block;
    width: 100%;
    height: 100%;
    stroke: none;
}

/* Dialog */
.dialog {
    position: absolute;
    top: 0;
    left: 0;
    width: 275px;
    border: 1px solid #dddbde;
    border-top: 0;
    background: #f2f1f3;
}
.dialog-title {
    display: flex;
    align-items: center;
    gap: 4px;
    height: 23px;
    margin: 0 -1px 5px;
    padding: 0 6px;
    background: #00628a;
    color: #e8f4f8;
    font-size: 12px;
}
.dialog-title h1 {
    flex: 1;
    margin-left: 3px;
}
.dialog-title svg {
    display: block;
    width: 14px;
    height: 14px;
    stroke: #fff;
    stroke-width: 2;
}
.dialog-title button {
    width: 16px;
    font-size: 14px;
    font-weight: bold;
}
.card {
    margin: 0 5px 3px;
    padding: 0 7px;
    border: 1px solid #d6d4d7;
    background: #fff;
}
.method {
    padding: 6px 7px;
}
.method .select {
    height: 25px;
    padding-left: 4px;
}
.method svg {
    width: 16px;
    height: 16px;
}
.card h3 {
    display: flex;
    align-items: center;
    gap: 5px;
    height: 19px;
    color: #24607f;
}
.card h3::before {
    content: "";
    width: 6px;
    height: 4px;
    background: #245a5c;
    clip-path: polygon(0 0, 100% 0, 50% 100%);
}
.line {
    display: flex;
    align-items: center;
    gap: 4px;
}
.input .line {
    margin-top: 6px;
}
.tick {
    width: 14px;
    height: 14px;
    stroke: #3fc35f;
    stroke-width: 2;
}
.pick {
    display: flex;
    align-items: center;
    justify-content: center;
    width: 30px;
    height: 30px;
    margin-left: auto;
    border: 1px solid #767676;
}
.pick svg {
    width: 22px;
    height: 22px;
}
.input .scope-line {
    justify-content: space-between;
    margin-top: 2px;
}
.scope-line .select {
    width: 125px;
    height: 21px;
}
.search {
    display: block;
    width: 100%;
    height: 25px;
    margin: 2px 0 7px;
    border: 1px solid #767676;
}
.items {
    position: relative;
    height: 230px;
    margin: 7px 0;
    border: 1px solid #d6d4d7;
    overflow: hidden;
}
.items-head {
    height: 18px;
    padding: 2px 0 0 6px;
    border-bottom: 1px solid #dcdcde;
    background: linear-gradient(#d6d4d7, #d6d4d7) 124px 0 / 1px 100% no-repeat #f2f1f3;
}
.items ul {
    display: grid;
    grid-auto-rows: 18px 19px;
    height: 210px;
    margin-right: 15px;
    overflow-y: auto;
    scrollbar-width: none;
    background: linear-gradient(#ecebed, #ecebed) 124px 0 / 1px 100% no-repeat;
}
.items li {
    display: flex;
    align-items: center;
    position: relative;
    padding-left: 6px;
    border-bottom: 1px solid #f3f2f4;
}
.items b {
    width: 8px;
    margin-right: 5px;
    font-size: 11px;
    line-height: 12px;
    text-align: center;
}
.items li svg {
    width: 14px;
    height: 14px;
    margin-left: 1px;
}
.items label {
    width: 77px;
    padding: 1px 2px;
    border: 1px solid transparent;
}
.items .selected label {
    border: 1px dotted #333;
    background: #cfe4e8;
}
.items li .cursor {
    position: absolute;
    left: 33px;
    top: 14px;
    z-index: 1;
    width: 12px;
    height: 18px;
    fill: #fff;
    stroke: #444;
}
.thumb {
    position: absolute;
    top: 34px;
    right: 7px;
    width: 2px;
    height: 90px;
    background: #77757a;
}
.expand {
    display: flex;
    justify-content: center;
    height: 12px;
    margin: 0 5px;
    padding-top: 3px;
    border-bottom: 1px solid #d0ced1;
}
.expand .caret {
    width: 8px;
}
.buttons {
    display: flex;
    justify-content: flex-end;
    gap: 5px;
    padding: 8px 14px 9px;
}
.buttons button {
    width: 61px;
    height: 22px;
    border: 1px solid #00628a;
}
.ok {
    background: #00628a;
    color: #e8f4f8;
}
.cancel {
    background: #f5f9fb;
    color: #24607f;
}

.status {
    flex: none;
    height: 21px;
    padding: 2px;
    border-top: 1px solid #b5b5b7;
    font-family: "Open Sans", "Noto Sans", sans-serif;
    font-weight: 600;
    color: #111;
}
```
